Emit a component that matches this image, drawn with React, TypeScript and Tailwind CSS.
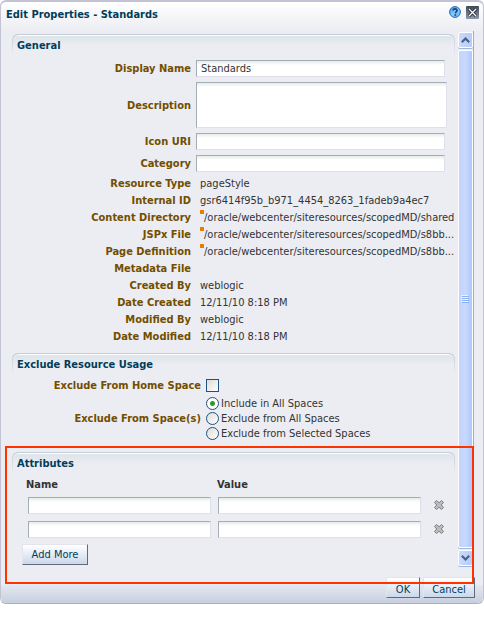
import { useState } from "react";
import type { ReactNode } from "react";
import clsx from "clsx";

const inputClass =
  "block rounded-none border border-t-[#a3adb4] border-l-[#a3adb4] border-r-[#dfe0ec] border-b-[#dfe0ec] bg-white bg-linear-to-b from-[#e6ebe8] to-white to-[4px] px-1 text-[11px] text-[#333333] outline-none";

const buttonClass =
  "h-[21px] border border-t-[#e3e5ee] border-l-[#e3e5ee] border-r-[#5f6b7c] border-b-[#5f6b7c] bg-linear-to-b from-white to-[#ccd7ea] text-center text-[11px] text-[#003d5b]";

const details = [
  { label: "Resource Type", value: "pageStyle" },
  { label: "Internal ID", value: "gsr6414f95b_b971_4454_8263_1fadeb9a4ec7" },
  { label: "Content Directory", value: "/oracle/webcenter/siteresources/scopedMD/shared", marked: true },
  { label: "JSPx File", value: "/oracle/webcenter/siteresources/scopedMD/s8bb...", marked: true },
  { label: "Page Definition", value: "/oracle/webcenter/siteresources/scopedMD/s8bb...", marked: true },
  { label: "Metadata File", value: "" },
  { label: "Created By", value: "weblogic" },
  { label: "Date Created", value: "12/11/10 8:18 PM" },
  { label: "Modified By", value: "weblogic" },
  { label: "Date Modified", value: "12/11/10 8:18 PM" },
];

const spaceOptions = [
  "Include in All Spaces",
  "Exclude from All Spaces",
  "Exclude from Selected Spaces",
];

function SectionHeader({ title }: { title: string }) {
  return (
    <div className="rounded-t-md bg-linear-to-b from-[#c3ccd6] to-[#ecedf2] px-px pt-px">
      <div className="rounded-t-md border-t border-white bg-linear-to-b from-[#dce4ea] to-[#ecedf2] to-[10px]">
        <h2 className="h-5 px-1 text-[11px] leading-5 font-bold text-[#003d5b]">{title}</h2>
      </div>
    </div>
  );
}

interface FieldProps {
  id: string;
  label: string;
  children: ReactNode;
}

function Field({ id, label, children }: FieldProps) {
  return (
    <div className="grid grid-cols-[179px_1fr] items-center gap-[5px]">
      <label htmlFor={id} className="text-right font-bold text-[#724e00]">
        {label}
      </label>
      {children}
    </div>
  );
}

function ChevronButton({ direction }: { direction: "up" | "down" }) {
  return (
    <button
      type="button"
      aria-label={`Scroll ${direction}`}
      className="flex h-4 w-full shrink-0 items-center justify-center rounded-xs border border-white bg-linear-to-r from-[#ccdafd] to-[#b5cbfa] shadow-[0_1px_0_#9db8de]"
    >
      <svg
        viewBox="0 0 9 6"
        className={clsx("h-[6px] w-[9px]", direction === "down" && "rotate-180")}
        fill="none"
        stroke="#4d6185"
        strokeWidth="2.2"
      >
        <path d="M0.8 5.2 4.5 1.5 8.2 5.2" />
      </svg>
    </button>
  );
}

function Scrollbar() {
  return (
    <div className="flex w-4 shrink-0 flex-col gap-[2px] border-r border-[#9aafd0] pt-px pb-px">
      <ChevronButton direction="up" />
      <div className="flex flex-1 items-center justify-center rounded-xs border border-white bg-linear-to-r from-[#c4d3fb] via-[#c8d8fe] to-[#adc8fa] shadow-[0_1px_0_#9db8de]">
        <div className="flex flex-col gap-px">
          {[0, 1, 2, 3].map((line) => (
            <div key={line} className="h-px w-[7px] bg-[#8cb0f8] shadow-[-1px_-1px_0_#eef4fe]" />
          ))}
        </div>
      </div>
      <ChevronButton direction="down" />
    </div>
  );
}

function HelpIcon() {
  return (
    <svg viewBox="0 0 12 12" className="h-3 w-3">
      <defs>
        <linearGradient id="help" x1="0" y1="0" x2="1" y2="1">
          <stop offset="0" stopColor="#3d94e4" />
          <stop offset="0.5" stopColor="#86cbfb" />
          <stop offset="1" stopColor="#5fb4f2" />
        </linearGradient>
      </defs>
      <circle cx="6" cy="6" r="5.4" fill="url(#help)" stroke="#2469b8" strokeWidth="1" />
      <path d="M4.1 4.6c0-2.4 3.9-2.3 3.9-.1 0 1.3-1.7 1.3-1.7 2.7" fill="none" stroke="#123f86" strokeWidth="1.6" />
      <rect x="5.5" y="8.2" width="1.7" height="1.6" fill="#123f86" />
    </svg>
  );
}

function CloseIcon() {
  return (
    <svg viewBox="0 0 13 13" className="h-[13px] w-[13px]">
      <defs>
        <linearGradient id="close" x1="0" y1="0" x2="0" y2="1">
          <stop offset="0" stopColor="#3f4757" />
          <stop offset="1" stopColor="#8d99ab" />
        </linearGradient>
      </defs>
      <rect width="13" height="13" rx="1" fill="url(#close)" />
      <path d="M3 3l7 7M10 3l-7 7" stroke="#1f2430" strokeWidth="3" />
      <path d="M3 3l7 7M10 3l-7 7" stroke="#ffffff" strokeWidth="1.3" />
    </svg>
  );
}

function RemoveIcon() {
  return (
    <svg viewBox="0 0 10 10" className="h-[10px] w-[10px]">
      <path
        d="M2.5.5 5 2.8 7.5.5 9.5 2.5 7.2 5 9.5 7.5 7.5 9.5 5 7.2 2.5 9.5.5 7.5 2.8 5 .5 2.5z"
        fill="#bcbcbc"
        stroke="#7d7d7d"
        strokeWidth="1"
      />
    </svg>
  );
}

export default function App() {
  const [displayName, setDisplayName] = useState("Standards");
  const [space, setSpace] = useState(spaceOptions[0]);
  const [attributes, setAttributes] = useState([1, 2]);

  return (
    <div
      role="dialog"
      aria-labelledby="dialog-title"
      className="relative flex w-full flex-col rounded-md border border-t-2 border-[#c4c3d3] border-b-[#b0b0b4] bg-[#ecedf2] font-['DejaVu_Sans_Condensed','Noto_Sans',sans-serif] text-[11px] leading-[17px] text-[#333333]"
    >
      <header className="flex h-[29px] items-start justify-between rounded-t-md bg-linear-to-b from-white to-[#ecedf2] pt-1 pr-1 pl-[5px]">
        <h1 id="dialog-title" className="text-[11px] leading-[17px] font-bold text-[#003d5b]">
          Edit Properties - Standards
        </h1>
        <div className="flex items-start gap-[5px]">
          <button type="button" aria-label="Help">
            <HelpIcon />
          </button>
          <button type="button" aria-label="Close">
            <CloseIcon />
          </button>
        </div>
      </header>

      <div className="flex gap-[3px] pr-[9px] pl-[11px]">
        <div className="flex min-w-0 flex-1 flex-col gap-2 pt-[3px]">
          <section>
            <SectionHeader title="General" />
            <div className="flex flex-col gap-[5px] pt-1 pr-2">
              <Field id="display-name" label="Display Name">
                <input
                  id="display-name"
                  className={clsx(inputClass, "mr-[2px] h-[17px]")}
                  value={displayName}
                  onChange={(e) => setDisplayName(e.target.value)}
                />
              </Field>
              <Field id="description" label="Description">
                <textarea id="description" className={clsx(inputClass, "h-[46px] w-full resize-none")} />
              </Field>
              <Field id="icon-uri" label="Icon URI">
                <input id="icon-uri" className={clsx(inputClass, "mr-[2px] h-[17px]")} />
              </Field>
              <Field id="category" label="Category">
                <input id="category" className={clsx(inputClass, "mr-[2px] h-[17px]")} />
              </Field>
            </div>
            <dl className="pt-[3px]">
              {details.map((item) => (
                <div key={item.label} className="grid h-[17px] grid-cols-[179px_1fr] gap-[9px]">
                  <dt className="text-right font-bold text-[#724e00]">{item.label}</dt>
                  <dd className="flex whitespace-nowrap">
                    {item.marked && <span className="mt-px h-1 w-1 shrink-0 bg-[#e67e00]" />}
                    {item.value}
                  </dd>
                </div>
              ))}
            </dl>
          </section>

          <section className="pb-[3px]">
            <SectionHeader title="Exclude Resource Usage" />
            <div className="grid grid-cols-[189px_1fr] items-center gap-x-[5px] gap-y-[2px] pt-[2px]">
              <label htmlFor="exclude-home" className="text-right font-bold text-[#724e00]">
                Exclude From Home Space
              </label>
              <input
                id="exclude-home"
                type="checkbox"
                className="h-[13px] w-[13px] appearance-none border border-[#1d5182] bg-linear-to-br from-[#dcdcd7] to-white checked:bg-[#21a121]"
              />
              <span id="exclude-spaces" className="text-right font-bold text-[#724e00]">
                Exclude From Space(s)
              </span>
              <div role="radiogroup" aria-labelledby="exclude-spaces">
                {spaceOptions.map((option) => (
                  <label key={option} className="flex h-[15px] items-center gap-[2px]">
                    <input
                      type="radio"
                      name="spaces"
                      checked={space === option}
                      onChange={() => setSpace(option)}
                      className="h-[13px] w-[13px] shrink-0 appearance-none rounded-full border border-[#1d5182] bg-linear-to-br from-[#dcdcd7] to-white checked:bg-radial checked:from-[#21a121] checked:from-[2px] checked:to-white checked:to-[3px]"
                    />
                    {option}
                  </label>
                ))}
              </div>
            </div>
          </section>

          <section className="pb-[2px]">
            <SectionHeader title="Attributes" />
            <table className="w-full table-fixed border-collapse">
              <colgroup>
                <col />
                <col className="w-[210px]" />
                <col className="w-[34px]" />
              </colgroup>
              <thead>
                <tr className="h-[19px] text-left align-bottom">
                  <th className="p-0 pl-[14px]">Name</th>
                  <th className="p-0 pl-[6px]">Value</th>
                  <th className="p-0" />
                </tr>
              </thead>
              <tbody>
                {attributes.map((id) => (
                  <tr key={id} className="h-6">
                    <td className="p-0 pl-4">
                      <input aria-label="Name" className={clsx(inputClass, "h-[17px] w-full")} />
                    </td>
                    <td className="p-0 pl-[7px]">
                      <input aria-label="Value" className={clsx(inputClass, "h-[17px] w-full")} />
                    </td>
                    <td className="p-0 pl-[2px]">
                      <button
                        type="button"
                        aria-label="Remove attribute"
                        className="mx-auto block"
                        onClick={() => setAttributes(attributes.filter((a) => a !== id))}
                      >
                        <RemoveIcon />
                      </button>
                    </td>
                  </tr>
                ))}
              </tbody>
            </table>
            <button
              type="button"
              className={clsx(buttonClass, "mt-[3px] ml-[10px] w-[66px]")}
              onClick={() => setAttributes([...attributes, Date.now()])}
            >
              Add More
            </button>
          </section>
        </div>
        <Scrollbar />
      </div>

      <footer className="flex justify-end gap-[3px] rounded-b-md bg-linear-to-b from-[#ecedf2] from-50% via-[#e3e9f1] via-50% to-[#c6cfdf] pt-[10px] pr-2 pb-[5px]">
        <button type="button" className={clsx(buttonClass, "w-[34px] pt-[3px]")}>
          OK
        </button>
        <button type="button" className={clsx(buttonClass, "w-[52px] pt-[3px]")}>
          Cancel
        </button>
      </footer>

      {/* highlight around the Attributes section */}
      <div className="pointer-events-none absolute right-[9px] bottom-[19px] left-1 h-[138px] border-2 border-[#ff3300]" />
    </div>
  );
}
